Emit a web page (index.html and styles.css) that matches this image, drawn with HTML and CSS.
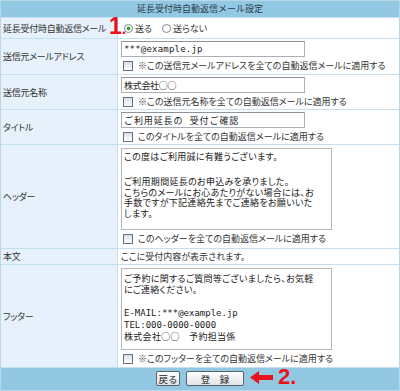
FILE: index.html
```html
<!DOCTYPE html>
<html lang="ja">
  <head>
    <meta charset="UTF-8" />
    <meta name="viewport" content="width=device-width, initial-scale=1.0" />
    <title>延長受付時自動返信メール設定</title>

    <link rel="stylesheet" href="styles.css">
  </head>

  <body>
    <form class="mailform">
      <div class="head">延長受付時自動返信メール設定</div>

      <div class="label">延長受付時自動返信メール</div>
      <div class="value radios">
        <label class="opt"><input type="radio" name="send" checked>送る</label>
        <label class="opt"><input type="radio" name="send">送らない</label>
      </div>

      <div class="label">送信元メールアドレス</div>
      <div class="value">
        <input class="text" type="text" value="***@example.jp">
        <label class="check"><input type="checkbox">※この送信元メールアドレスを全ての自動返信メールに適用する</label>
      </div>

      <div class="label">送信元名称</div>
      <div class="value">
        <input class="text jp" type="text" value="株式会社○○">
        <label class="check"><input type="checkbox">※この送信元名称を全ての自動返信メールに適用する</label>
      </div>

      <div class="label">タイトル</div>
      <div class="value">
        <input class="text spaced" type="text" value="ご利用延長の 受付ご確認">
        <label class="check"><input type="checkbox">このタイトルを全ての自動返信メールに適用する</label>
      </div>

      <div class="label">ヘッダー</div>
      <div class="value">
        <div class="area">
          <p>この度はご利用誠に有難うございます。</p>
          <p>ご利用期間延長のお申込みを承りました。<br>こちらのメールにお心あたりがない場合には、お<br>手数ですが下記連絡先までご連絡をお願いいた<br>します。</p>
        </div>
        <label class="check"><input type="checkbox">このヘッダーを全ての自動返信メールに適用する</label>
      </div>

      <div class="label">本文</div>
      <div class="value body-text">ここに受付内容が表示されます。</div>

      <div class="label">フッター</div>
      <div class="value">
        <div class="area foot">
          <p>ご予約に関するご質問等ございましたら、お気軽<br>にご連絡ください。</p>
          <p class="tight">E-MAIL:***@example.jp<br>TEL:000-0000-0000<br><span class="jp">株式会社○○　予約担当係</span></p>
        </div>
        <label class="check"><input type="checkbox">※このフッターを全ての自動返信メールに適用する</label>
      </div>

      <div class="buttons">
        <button type="button" class="btn">戻る</button>
        <button type="button" class="btn wide">登　録</button>
      </div>

      <!-- 注記 -->
      <div class="mark mark1">1<span class="dot">.</span></div>
      <div class="mark mark2">
        <svg width="23" height="13" viewBox="0 0 23 13"><polygon points="0,6.5 9,0 9,4 23,4 23,9 9,9 9,13" fill="#e8121c"/></svg>
        <span>2.</span>
      </div>
    </form>
  </body>
</html>
```

FILE: styles.css
```css
body {
  margin: 0;
  font-family: "Noto Sans CJK JP", sans-serif;
  font-size: 9px;
  color: #333;
}

.mailform {
  position: relative;
  display: grid;
  grid-template-columns: 116px 1fr;
  grid-template-rows: 16px 20px 35px 34px 34px 103px 15px 102px 22px;
  gap: 1px;
  width: 400px;
  box-sizing: border-box;
  border: 1px solid #b7d7ea;
  background: #c4dfef;
}

.head {
  grid-column: 1 / 3;
  background: #93c8e3;
  text-align: center;
  line-height: 16px;
  color: #2a3a48;
}

.label {
  background: #e6f1fc;
  padding-left: 2px;
  display: flex;
  align-items: center;
  font-feature-settings: "palt";
  letter-spacing: -0.25px;
}

.value {
  background: #fff;
  padding: 2px 0 0 3px;
  font-feature-settings: "palt";
}

.radios {
  display: flex;
  align-items: center;
  gap: 10px;
  padding: 0 0 0 6px;
}

.opt {
  display: flex;
  align-items: center;
  gap: 2px;
}

.opt input {
  appearance: none;
  width: 9px;
  height: 9px;
  margin: 0;
  border: 1px solid #7d8b98;
  border-radius: 50%;
  background: #fff;
  box-sizing: border-box;
}

.opt input:checked {
  background: radial-gradient(circle, #3aa53a 0 1.8px, #fff 2.2px);
}

.text {
  display: block;
  width: 184px;
  height: 16px;
  box-sizing: border-box;
  margin: 0;
  padding: 0 0 0 2px;
  border: 1px solid #a9b0b8;
  border-top-color: #8c939b;
  font-family: "DejaVu Sans Mono", "Noto Sans CJK JP", monospace;
  font-size: 9px;
  color: #222;
  letter-spacing: 0.2px;
}

.text.jp {
  font-family: "Noto Sans CJK JP", sans-serif;
  font-feature-settings: normal;
  letter-spacing: -0.3px;
}

.text.spaced {
  letter-spacing: 0.9px;
}

.check {
  display: flex;
  align-items: center;
  gap: 5px;
  margin-top: 2px;
  padding-left: 2px;
  height: 13px;
  white-space: nowrap;
}

.check input {
  appearance: none;
  width: 10px;
  height: 10px;
  margin: 0;
  border: 1px solid #5f7184;
  background: linear-gradient(#d9e0e8, #fff);
  box-sizing: border-box;
}

.area {
  width: 211px;
  height: 82px;
  box-sizing: border-box;
  margin-top: 1px;
  padding: 3px 0 0 2px;
  border: 1px solid #b3b8be;
  font-family: "DejaVu Sans Mono", "Noto Sans CJK JP", monospace;
  font-size: 9px;
  line-height: 10.5px;
  letter-spacing: 0.3px;
  white-space: nowrap;
  color: #222;
  overflow: hidden;
}

.area p {
  margin: 0 0 14.5px;
}

.area.foot {
  padding-top: 5px;
}

.area.foot p {
  margin-bottom: 13px;
}

.area .tight {
  line-height: 11.5px;
  letter-spacing: 0;
}

.area .jp {
  font-family: "Noto Sans CJK JP", sans-serif;
  font-feature-settings: normal;
  letter-spacing: 0.3px;
}

.body-text {
  padding-top: 0;
  display: flex;
  align-items: center;
}

.buttons {
  grid-column: 1 / 3;
  background: #93c8e3;
  display: flex;
  justify-content: center;
  align-items: flex-start;
  gap: 6px;
  padding-top: 3px;
}

.btn {
  height: 15px;
  width: 24px;
  padding: 0;
  border: 1px solid #59636d;
  border-radius: 2px;
  background: linear-gradient(#ffffff, #dfe3e8);
  font-family: "Noto Sans CJK JP", sans-serif;
  font-size: 9.5px;
  line-height: 12px;
  color: #222;
}

.btn.wide {
  width: 58px;
}

.mark {
  position: absolute;
  font-family: "Liberation Sans", sans-serif;
  font-weight: bold;
  color: #e8121c;
}

.mark1 {
  left: 108px;
  top: 14px;
  font-size: 23px;
  line-height: 23px;
}

.mark1 .dot {
  font-size: 16px;
}

.mark2 {
  left: 249px;
  top: 364px;
  display: flex;
  align-items: center;
  gap: 5px;
  font-size: 22px;
  line-height: 24px;
}
```
